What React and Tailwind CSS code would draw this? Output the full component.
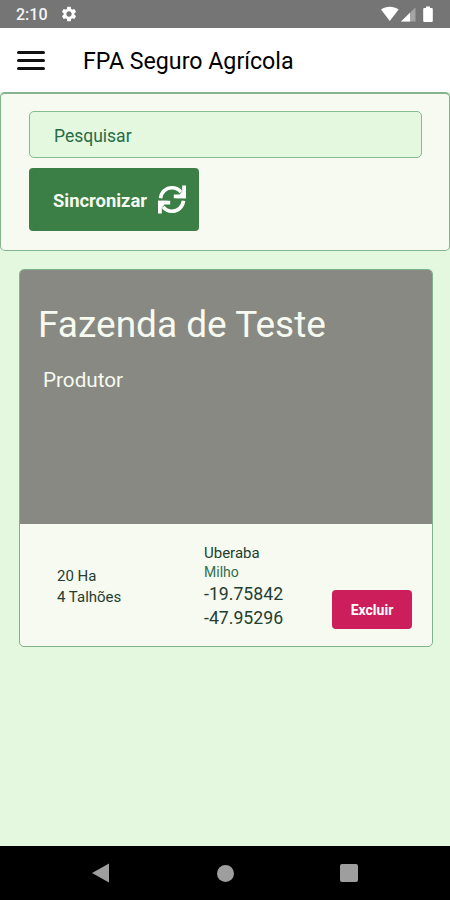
import React from "react";
import { MdSettings } from "react-icons/md";

function SyncIcon({ className }) {
  return (
    <svg className={className} viewBox="0 0 28 29" fill="none">
      <g stroke="currentColor" strokeWidth="3.600">
        <path d="M2.500 13.200C3.300 7 8 2.800 14 2.800c3.800 0 6.800 1.500 9 4.300" />
        <path d="M25.500 15.800C24.700 22 20 26.200 14 26.200c-3.800 0-6.800-1.500-9-4.300" />
      </g>
      <g fill="currentColor">
        <path d="M24.200 .4H28V13.200H15.800V9.600H21.500L24.200 6.400z" />
        <path d="M3.800 28.600H0V15.800H12.200V19.400H6.500L3.800 22.600z" />
        <path d="M28 3.500V13.200H18.500zM0 25.500V15.800H9.500z" />
      </g>
    </svg>
  );
}

function StatusBar() {
  return (
    <div className="h-7 bg-[#757575] flex items-center justify-between pl-4 pr-4 text-white">
      <div className="flex items-center gap-3 pt-0.5">
        <span className="text-base leading-none font-medium text-[#f5f5f5]">2:10</span>
        <MdSettings className="w-[18px] h-[18px] -mt-0.5" />
      </div>
      {/* Wifi, signal and battery */}
      <svg width="54" height="18" viewBox="0 0 54 18" fill="currentColor">
        <path d="M1 4.600C6.200.8 13.400 .8 18.600 4.600L9.800 16z" />
        <path d="M21 16.500L35.500 2.500V16.500z" opacity="0.35" />
        <path d="M21 16.500L30 7.800V16.500z" />
        <path d="M46 1.500h4v1.500h1.800q1 0 1 1v12q0 1-1 1h-7.600q-1 0-1-1v-12q0-1 1-1H46z" />
      </svg>
    </div>
  );
}

function Header() {
  return (
    <header className="h-16 bg-white flex items-center px-4">
      <button className="w-7 h-[19px] ml-px flex flex-col justify-between" aria-label="Menu">
        <span className="w-full h-[3px] bg-[#111111] rounded-xs"></span>
        <span className="w-full h-[3px] bg-[#111111] rounded-xs"></span>
        <span className="w-full h-[3px] bg-[#111111] rounded-xs"></span>
      </button>
      <h1 className="ml-[38px] mt-[3px] text-[23.2px] leading-none font-normal text-black">
        FPA Seguro Agrícola
      </h1>
    </header>
  );
}

function SearchPanel() {
  return (
    <section className="h-[159px] bg-[#f7faf0] border border-t-2 border-[#84b48e] rounded-[5px] pl-7 pr-[27px] pt-[17px]">
      <input
        type="text"
        placeholder="Pesquisar"
        className="block w-full h-[47px] px-6 pt-0.5 bg-[#e3f8df] border border-[#84bb91] rounded-[5px] text-[17.5px] placeholder:text-[#286b46] placeholder:opacity-100"
      />
      <button className="mt-[10px] w-[170px] h-[63px] flex items-center bg-[#3b7e46] rounded-[4px] pl-6 text-white">
        <span className="mt-0.5 text-[18.4px] font-bold text-[#f7faf0]">Sincronizar</span>
        <SyncIcon className="ml-[11px] w-7 h-[29px]" />
      </button>
    </section>
  );
}

function FarmCard() {
  return (
    <article className="mt-[18px] ml-[19px] mr-[17px] h-[378px] bg-[#f7faf0] border border-[#7fb38c] rounded-[5px] overflow-hidden">
      <div className="h-[254px] bg-[#888983] text-[#f7faf0] pt-[33px] pl-[18px]">
        <h2 className="text-[37px] leading-[44px]">Fazenda de Teste</h2>
        <p className="ml-[5px] mt-[21px] text-[20.7px] leading-6">Produtor</p>
      </div>
      <div className="flex text-[#243e31]">
        <div className="w-[147px] ml-[37px] pt-[42px] text-[15px] leading-5">
          <p>20 Ha</p>
          <p className="mt-px">4 Talhões</p>
        </div>
        <div className="w-[128px] pt-[19px] text-[15px] leading-5">
          <p>Uberaba</p>
          <p className="text-[14px] leading-[18px] text-[#2f704c]">Milho</p>
          <p className="mt-px text-[17.7px] leading-6">-19.75842</p>
          <p className="text-[17.7px] leading-6">-47.95296</p>
        </div>
        <button className="mt-[66px] w-20 h-[39px] bg-[#cb1e5b] rounded-[4px] text-white text-sm font-bold">
          Excluir
        </button>
      </div>
    </article>
  );
}

function NavigationBar() {
  return (
    <nav className="mt-auto h-[54px] bg-black flex items-center pl-[92px] text-[#9e9e9e]">
      <svg width="17" height="20" viewBox="0 0 17 20" fill="currentColor">
        <path d="M0 10L17 .5V19.500z" />
      </svg>
      <span className="ml-[108px] w-[17px] h-[17px] rounded-full bg-[#9e9e9e]"></span>
      <span className="ml-[106px] w-[18px] h-[18px] rounded-[2px] bg-[#9e9e9e]"></span>
    </nav>
  );
}

export default function App() {
  return (
    <div className="w-[450px] h-[900px] flex flex-col bg-[#e3f8df] font-['Roboto',sans-serif] overflow-hidden">
      <StatusBar />
      <Header />
      <SearchPanel />
      <FarmCard />
      <NavigationBar />
    </div>
  );
}
